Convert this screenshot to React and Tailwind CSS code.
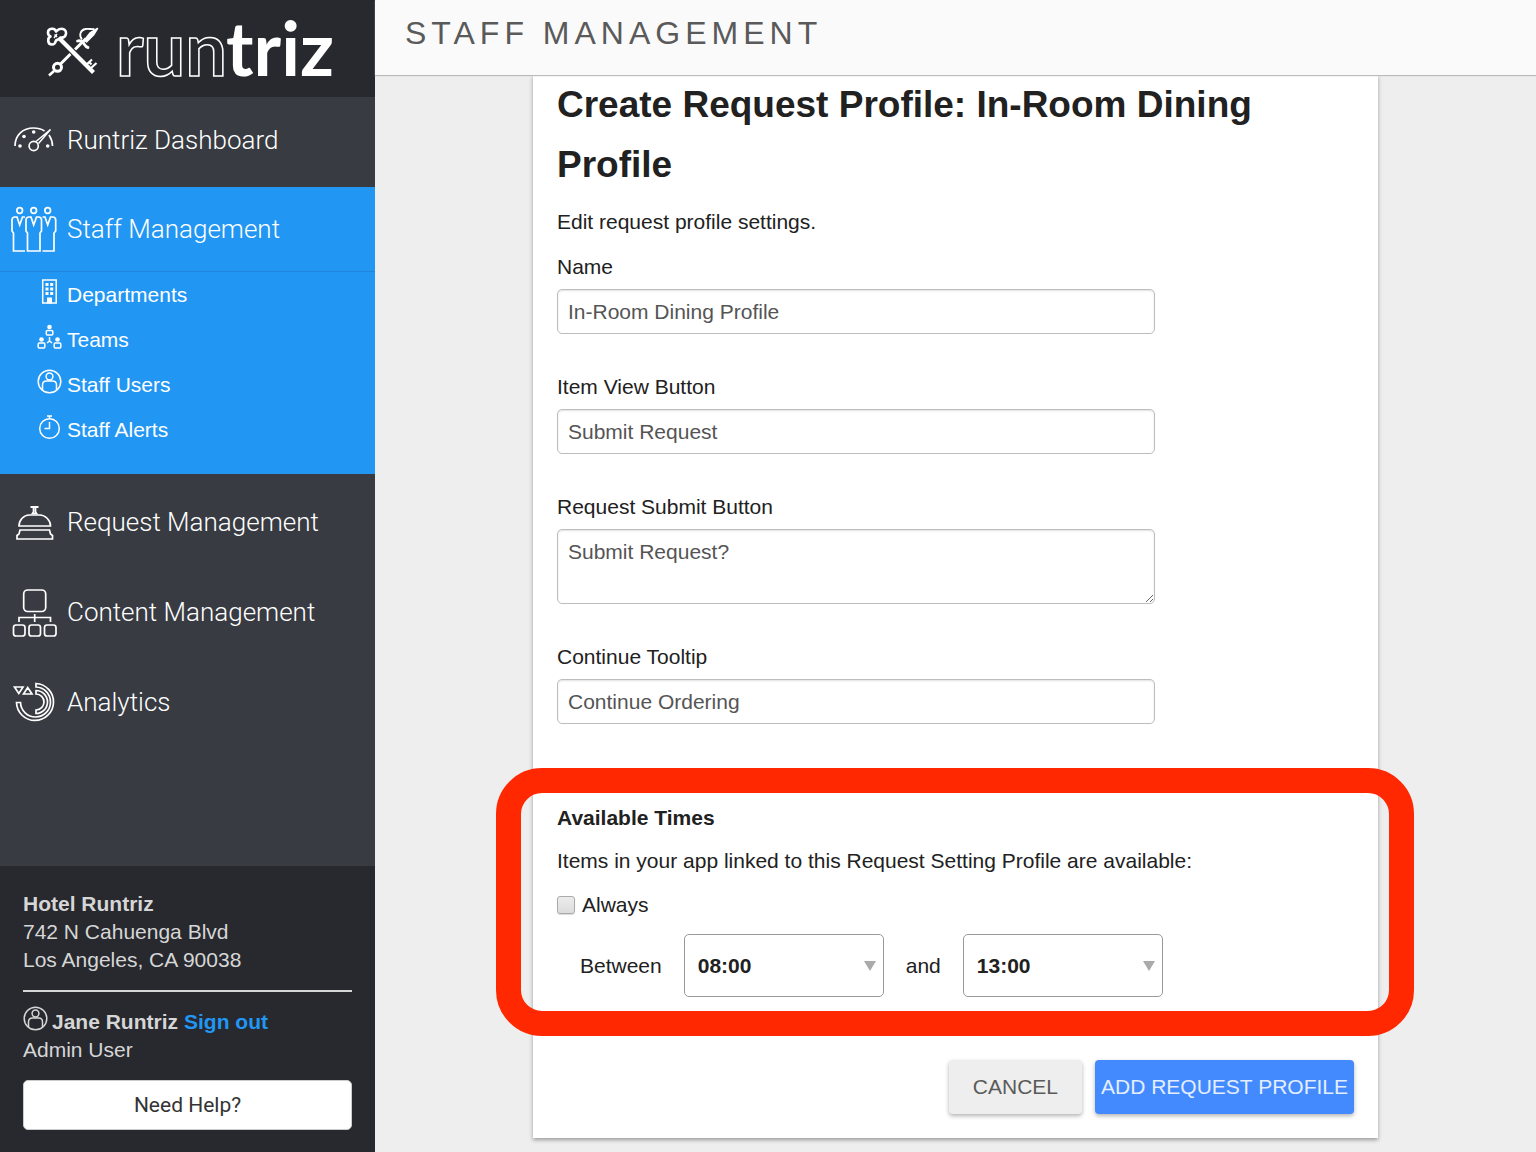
import { useId } from "react";

function Logo() {
  return (
    <svg width="375" height="97" viewBox="0 0 375 97" fill="none" stroke="#fff" role="img" aria-label="runtriz">
      {/* sword */}
      <path d="M86 38.500 60.500 64" strokeWidth="3" />
      <path d="M97.500 28.500 93.500 35 86.500 42 84.500 40 90 33Z" fill="#fff" strokeWidth="1.500" strokeLinejoin="round" />
      <path d="M82 39.500C78.500 35 80.500 30 85.500 29c3.500-.6 6 .6 9 0" strokeWidth="1.800" />
      <path d="M77.500 41c3-1 4 0 5.500 1.500s2 4.500 5 5" strokeWidth="2.800" strokeLinecap="round" />
      <circle cx="57.500" cy="67.300" r="4" strokeWidth="3" />
      <path d="M54 71 49 75.500" strokeWidth="2.500" />
      {/* key */}
      <path d="M64 43 74 53" stroke="#27292e" strokeWidth="6.500" />
      <path d="M60 39 93.500 72.500" strokeWidth="4.200" />
      <path d="M86.500 64.500 92 59.500M90.500 68.500 96.500 63M88.500 61.500l3 3" strokeWidth="2.200" />
      <path d="M56 31.500c-1-4-8-3.500-8 1 0 2 1 3.500 2.500 4-3 1-3.500 8 1.500 8 3 0 3.500-2 4-4l3-1.500 1.500-1.500c6 1 7.500-7 2.500-8.500-3-1-5 .5-7 2.500Z" strokeWidth="2.600" strokeLinejoin="round" />
      <path d="m54.500 34.500 2.500 2.500m0-3-3 4" strokeWidth="1.500" />
      <g fontFamily="Lato, sans-serif" fontSize="74" fontWeight="700">
        <text x="116" y="76" strokeWidth="1.500">run</text>
        <text x="226" y="76" fill="#fff" stroke="none">triz</text>
      </g>
    </svg>
  );
}

const icons = {
  dashboard: (
    <>
      <path d="M15 146c0-11 8-18 18.500-18 4 0 8 1 11 3M49 135c2 3 3.500 7 3.500 11" />
      <circle cx="33.700" cy="146" r="4.600" />
      <path d="m36 141.500 14.500-12L38.500 143.500" strokeWidth="1.500" />
      <g fill="#fff" stroke="none">
        <circle cx="20" cy="146" r="1.800" />
        <circle cx="24" cy="136.500" r="1.800" />
        <circle cx="33.700" cy="132" r="1.800" />
        <circle cx="47.700" cy="146" r="1.800" />
      </g>
    </>
  ),
  staff: (
    <>
      <circle cx="19.700" cy="210.500" r="2.800" />
      <circle cx="33.700" cy="210.500" r="2.800" />
      <circle cx="47.700" cy="210.500" r="2.800" />
      <path d="M25 251H13.500V233L12 231V220c0-2 1-3 3-3h2l2.700 8 2.800-8H25" />
      <path d="M27.500 251V233L26 231V220c0-2 1-3 3-3h2l2.700 8 2.800-8h2c2 0 3 1 3 3v11l-1.500 2v18Z" />
      <path d="M42.500 251H54V233l1.700-2V220c0-2-1-3-3-3H50.500l-2.800 8-2.700-8H42.500" />
    </>
  ),
  request: (
    <>
      <path d="M30.500 507h8" strokeWidth="2" />
      <path d="M33.500 508v4l-1 1.500h4l-1-1.500v-4" />
      <path d="M19 526c0-6 5-11 10-11h11c5 0 10.500 5 10.500 11Z" />
      <path d="M20 530h29.500l1 4 2 1.500V539H17v-3.500l2-1.500Z" />
    </>
  ),
  content: (
    <>
      <rect x="23.700" y="590" width="22" height="21.500" rx="4" />
      <path d="M34.700 614v8M19 622v-4.500h31.500V622" />
      <rect x="13.500" y="625" width="11.500" height="11" rx="2.500" />
      <rect x="29" y="625" width="11.500" height="11" rx="2.500" />
      <rect x="44.500" y="625" width="11.500" height="11" rx="2.500" />
    </>
  ),
  analytics: (
    <>
      <path d="M14.500 687h8.500l-4.200 6.500ZM23.500 694l4.200-6.500L32 694Z" />
      <path d="M36 683.500a18.500 18.500 0 1 1-19.500 19h4A15 15 0 1 0 36 687Z" />
      <path d="M36 690.500a11.500 11.500 0 0 1 0 23v-3.500a8 8 0 0 0 0-16Z" />
    </>
  ),
};

function NavIcon({ name, top }) {
  return (
    <svg className="shrink-0" width="67" height="60" viewBox={`0 ${top} 67 60`} fill="none" stroke="#fff" strokeWidth="1.700" aria-hidden="true">
      {icons[name]}
    </svg>
  );
}

function UserIcon() {
  return (
    <>
      <circle cx="12.500" cy="12.500" r="11.300" />
      <circle cx="12.500" cy="7.500" r="3.400" />
      <path d="M5.500 21v-5c0-2.500 1.500-4 4-4h6c2.500 0 4 1.500 4 4v5" />
    </>
  );
}

const subIcons = {
  departments: (
    <>
      <rect x="5.700" y="1" width="13.500" height="23" />
      <g fill="currentColor" stroke="none">
        <path d="M8.500 4h3v3h-3zM13.200 4h3v3h-3zM8.500 8.500h3v3h-3zM13.200 8.500h3v3h-3zM8.500 13h3v3h-3zM13.200 13h3v3h-3zM10 18.500h5v6h-5z" />
      </g>
    </>
  ),
  teams: (
    <>
      <g fill="currentColor" stroke="none">
        <circle cx="12.500" cy="3" r="2.300" />
        <circle cx="4.500" cy="15.500" r="2.300" />
        <circle cx="20.500" cy="15.500" r="2.300" />
      </g>
      <rect x="9.300" y="6.500" width="6.500" height="4.500" rx="1" />
      <rect x="1.200" y="19" width="6.600" height="5" rx="1" />
      <rect x="17.200" y="19" width="6.600" height="5" rx="1" />
      <path d="M12.500 13v4l-2.500 2M12.500 17l2.500 2" />
    </>
  ),
  users: <UserIcon />,
  alerts: (
    <>
      <circle cx="12.500" cy="14.500" r="9.800" />
      <path d="M10 2h5M12.500 2v2.500M12.500 8v6.500H7.500" />
    </>
  ),
};

function SmallIcon({ children }) {
  return (
    <svg className="shrink-0" width="25" height="32" viewBox="0 0 25 32" fill="none" stroke="currentColor" strokeWidth="1.500" aria-hidden="true">
      {children}
    </svg>
  );
}

function NavLink({ icon, top, children, className = "h-[90px]" }) {
  return (
    <a href="#" className={`flex items-center font-[Roboto] text-[26px] font-light text-white ${className}`}>
      <NavIcon name={icon} top={top} />
      {children}
    </a>
  );
}

function SubLink({ icon, children }) {
  return (
    <li>
      <a href="#" className="flex h-[45px] items-center gap-[5px] pl-[37px] text-white">
        <SmallIcon>{subIcons[icon]}</SmallIcon>
        {children}
      </a>
    </li>
  );
}

function Sidebar() {
  return (
    <aside className="flex w-[375px] shrink-0 flex-col bg-[#383b42]">
      <div className="bg-[#27292e]">
        <Logo />
      </div>
      <nav>
        <NavLink icon="dashboard" top={110} className="mb-1 h-[86px]">Runtriz Dashboard</NavLink>
        <div className="mb-[3px] bg-[#2196f3] pb-[22px]">
          <NavLink icon="staff" top={199} className="h-[85px] border-b border-[#1e87db]">Staff Management</NavLink>
          <ul>
            <SubLink icon="departments">Departments</SubLink>
            <SubLink icon="teams">Teams</SubLink>
            <SubLink icon="users">Staff Users</SubLink>
            <SubLink icon="alerts">Staff Alerts</SubLink>
          </ul>
        </div>
        <NavLink icon="request" top={492}>Request Management</NavLink>
        <NavLink icon="content" top={582}>Content Management</NavLink>
        <NavLink icon="analytics" top={672}>Analytics</NavLink>
      </nav>
      <footer className="mt-auto bg-[#27292e] px-[23px] pt-6 pb-[22px] leading-7 text-[#d6d6d6]">
        <address className="not-italic">
          <strong className="block">Hotel Runtriz</strong>
          742 N Cahuenga Blvd
          <br />
          Los Angeles, CA 90038
        </address>
        <hr className="my-4 border-t-2 border-[#d6d6d6]" />
        <div className="flex h-7 items-center font-bold">
          <SmallIcon><UserIcon /></SmallIcon>
          <span className="mr-[6px] ml-1">Jane Runtriz</span>
          <a href="#" className="text-[#2196f3]">Sign out</a>
        </div>
        <p>Admin User</p>
        <button type="button" className="mt-4 h-[50px] w-full rounded-[5px] border border-[#ccc] bg-white font-[Roboto] text-[#333]">
          Need Help?
        </button>
      </footer>
    </aside>
  );
}

const control =
  "block w-3/4 rounded-[5px] border border-[#bdbdbd] bg-white px-[10px] text-[#555] shadow-[inset_0_1px_2px_rgba(0,0,0,0.12)]";

function Field({ label, value, multiline }) {
  const id = useId();
  return (
    <div className="mb-[30px]">
      <label htmlFor={id} className="block leading-[45px]">{label}</label>
      {multiline ? (
        <textarea id={id} defaultValue={value} className={`${control} h-[75px] py-[7px] leading-[30px]`} />
      ) : (
        <input id={id} type="text" defaultValue={value} className={`${control} h-[45px]`} />
      )}
    </div>
  );
}

const hours = Array.from({ length: 24 }, (_, h) => `${String(h).padStart(2, "0")}:00`);

function TimeSelect({ label, value }) {
  return (
    <div className="relative w-[200px]">
      <select
        aria-label={label}
        defaultValue={value}
        className="h-[63px] w-full appearance-none rounded-[5px] border border-[#999] bg-white px-[13px] font-bold"
      >
        {hours.map((h) => (
          <option key={h}>{h}</option>
        ))}
      </select>
      <svg className="pointer-events-none absolute top-[27px] right-2" width="12" height="10" viewBox="0 0 12 10" fill="#aaa" aria-hidden="true">
        <path d="M0 0h12L6 10Z" />
      </svg>
    </div>
  );
}

function AvailableTimes() {
  return (
    <section className="relative mt-[74px] leading-10">
      <h2 className="font-bold">Available Times</h2>
      <p className="mt-[3px]">Items in your app linked to this Request Setting Profile are available:</p>
      <label className="mt-1 flex items-center gap-[7px]">
        <input
          type="checkbox"
          className="size-[18px] appearance-none rounded-[3px] border border-[#aaa] bg-linear-to-b from-[#ececec] to-[#dcdcdc] shadow-[0_1px_1px_rgba(0,0,0,0.15)]"
        />
        Always
      </label>
      <div className="mt-[9px] flex items-center gap-[22px] pl-[23px]">
        <span>Between</span>
        <TimeSelect label="Start time" value="08:00" />
        <span>and</span>
        <TimeSelect label="End time" value="13:00" />
      </div>
      <div className="pointer-events-none absolute -top-[30px] -right-[60px] -bottom-[39px] -left-[61px] rounded-[46px] border-[25px] border-[#ff2800]" />
    </section>
  );
}

export default function App() {
  return (
    <div className="flex min-h-screen bg-[#eee] font-['Liberation_Sans',sans-serif] text-[21px] text-[#212121]">
      <Sidebar />
      <div className="flex min-w-0 grow flex-col">
        <header className="relative z-10 h-[75px] bg-[#fafafa] px-[30px] pt-[13px] shadow-[0_1px_1px_#bbb]">
          <h1 className="text-[32px] leading-10 tracking-[5px] text-[#5a5a5a]">STAFF MANAGEMENT</h1>
        </header>
        <main className="mx-auto mb-[14px] w-full max-w-[845px] bg-white px-6 pb-6 shadow-[0_2px_4px_rgba(0,0,0,0.35)]">
          <h2 className="mb-1 text-[37px] leading-[60px] font-bold">Create Request Profile: In-Room Dining Profile</h2>
          <p className="leading-[45px]">Edit request profile settings.</p>
          <Field label="Name" value="In-Room Dining Profile" />
          <Field label="Item View Button" value="Submit Request" />
          <Field label="Request Submit Button" value="Submit Request?" multiline />
          <Field label="Continue Tooltip" value="Continue Ordering" />
          <AvailableTimes />
          <div className="mt-[63px] flex justify-end gap-[13px]">
            <button type="button" className="h-[54px] rounded-[4px] bg-[#eee] px-6 text-[#5a5a5a] shadow-[0_2px_4px_rgba(0,0,0,0.3)]">
              CANCEL
            </button>
            <button type="button" className="h-[54px] rounded-[4px] bg-[#448aff] px-[6px] text-[#e3eeff] shadow-[0_2px_4px_rgba(0,0,0,0.3)]">
              ADD REQUEST PROFILE
            </button>
          </div>
        </main>
      </div>
    </div>
  );
}
